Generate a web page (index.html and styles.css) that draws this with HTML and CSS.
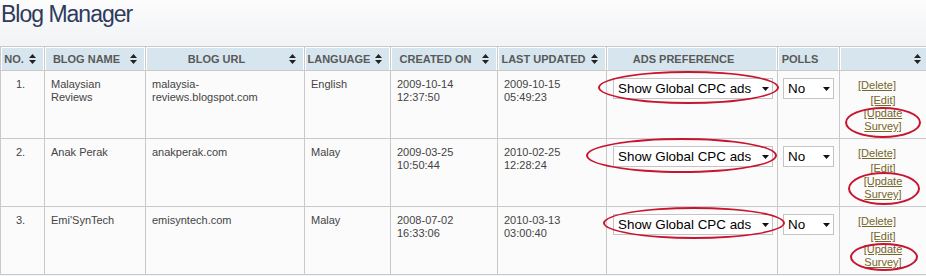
FILE: index.html
```html
<!DOCTYPE html>
<html>
<head>
<meta charset="utf-8">
<link rel="stylesheet" href="styles.css">
</head>
<body>
<div class="page">
  <h1 class="title">Blog Manager</h1>
  <table class="grid">
    <colgroup>
      <col class="c-no"><col class="c-name"><col class="c-url"><col class="c-lang"><col class="c-created"><col class="c-updated"><col class="c-ads"><col class="c-polls"><col class="c-act">
    </colgroup>
    <thead>
      <tr class="head">
        <th><div class="hd"><span class="lbl">NO.</span><svg class="sort" viewBox="0 0 7 10"><path d="M3.5 0L7 4H0z M0 6h7L3.5 10z"/></svg></div></th>
        <th><div class="hd"><span class="lbl">BLOG NAME</span><svg class="sort" viewBox="0 0 7 10"><path d="M3.5 0L7 4H0z M0 6h7L3.5 10z"/></svg></div></th>
        <th><div class="hd"><span class="lbl">BLOG URL</span><svg class="sort" viewBox="0 0 7 10"><path d="M3.5 0L7 4H0z M0 6h7L3.5 10z"/></svg></div></th>
        <th><div class="hd"><span class="lbl">LANGUAGE</span><svg class="sort" viewBox="0 0 7 10"><path d="M3.5 0L7 4H0z M0 6h7L3.5 10z"/></svg></div></th>
        <th><div class="hd"><span class="lbl">CREATED ON</span><svg class="sort" viewBox="0 0 7 10"><path d="M3.5 0L7 4H0z M0 6h7L3.5 10z"/></svg></div></th>
        <th><div class="hd"><span class="lbl">LAST UPDATED</span><svg class="sort" viewBox="0 0 7 10"><path d="M3.5 0L7 4H0z M0 6h7L3.5 10z"/></svg></div></th>
        <th><div class="hd"><span class="lbl">ADS PREFERENCE</span><span class="sort"></span></div></th>
        <th><div class="hd"><span class="lbl">POLLS</span><span class="sort"></span></div></th>
        <th><div class="hd"><span class="lbl"></span><svg class="sort" viewBox="0 0 7 10"><path d="M3.5 0L7 4H0z M0 6h7L3.5 10z"/></svg></div></th>
      </tr>
    </thead>
    <tbody>
      <tr class="row">
        <td class="num">1.</td>
        <td>Malaysian<br>Reviews</td>
        <td>malaysia-<br>reviews.blogspot.com</td>
        <td>English</td>
        <td>2009-10-14<br>12:37:50</td>
        <td>2009-10-15<br>05:49:23</td>
        <td><div class="select ads"><span>Show Global CPC ads</span><svg class="caret" viewBox="0 0 7 4"><path d="M0 0h7L3.5 4z"/></svg></div></td>
        <td><div class="select polls"><span>No</span><svg class="caret" viewBox="0 0 7 4"><path d="M0 0h7L3.5 4z"/></svg></div></td>
        <td class="act"><a class="del" href="#">[Delete]</a><a class="edit" href="#">[Edit]</a><a href="#">[Update</a><a href="#">Survey]</a></td>
      </tr>
      <tr class="row">
        <td class="num">2.</td>
        <td>Anak Perak</td>
        <td>anakperak.com</td>
        <td>Malay</td>
        <td>2009-03-25<br>10:50:44</td>
        <td>2010-02-25<br>12:28:24</td>
        <td><div class="select ads"><span>Show Global CPC ads</span><svg class="caret" viewBox="0 0 7 4"><path d="M0 0h7L3.5 4z"/></svg></div></td>
        <td><div class="select polls"><span>No</span><svg class="caret" viewBox="0 0 7 4"><path d="M0 0h7L3.5 4z"/></svg></div></td>
        <td class="act"><a class="del" href="#">[Delete]</a><a class="edit" href="#">[Edit]</a><a href="#">[Update</a><a href="#">Survey]</a></td>
      </tr>
      <tr class="row">
        <td class="num">3.</td>
        <td>Emi'SynTech</td>
        <td>emisyntech.com</td>
        <td>Malay</td>
        <td>2008-07-02<br>16:33:06</td>
        <td>2010-03-13<br>03:00:40</td>
        <td><div class="select ads"><span>Show Global CPC ads</span><svg class="caret" viewBox="0 0 7 4"><path d="M0 0h7L3.5 4z"/></svg></div></td>
        <td><div class="select polls"><span>No</span><svg class="caret" viewBox="0 0 7 4"><path d="M0 0h7L3.5 4z"/></svg></div></td>
        <td class="act"><a class="del" href="#">[Delete]</a><a class="edit" href="#">[Edit]</a><a href="#">[Update</a><a href="#">Survey]</a></td>
      </tr>
    </tbody>
  </table>
  <div class="mark m1"></div>
  <div class="mark m2"></div>
  <div class="mark m3"></div>
  <div class="mark m4"></div>
  <div class="mark m5"></div>
  <div class="mark m6"></div>
</div>
</body>
</html>
```
FILE: styles.css
```css
html, body {
  margin: 0;
  padding: 0;
}
body {
  width: 926px;
  height: 276px;
  overflow: hidden;
  background: linear-gradient(#fcfcfd, #f2f3f5 46px, #f2f3f5);
  font-family: "Liberation Sans", Arial, sans-serif;
}
.page {
  position: relative;
  width: 926px;
  height: 276px;
}
.title {
  margin: 0;
  height: 46px;
  padding-left: 1px;
  font-size: 23px;
  line-height: 28px;
  font-weight: normal;
  letter-spacing: -1px;
  color: #2e3b5b;
}
.grid {
  border-collapse: collapse;
  table-layout: fixed;
  width: 929px;
  background: #fbfbfb;
}
.c-no { width: 44px; }
.c-name { width: 101px; }
.c-url { width: 159px; }
.c-lang { width: 86px; }
.c-created { width: 107px; }
.c-updated { width: 109px; }
.c-ads { width: 171px; }
.c-polls { width: 62px; }
.c-act { width: 90px; }

.grid th, .grid td {
  border: 1px solid #c9c9c9;
}
.head th {
  height: 23px;
  padding: 0;
  background: #d7e6ee;
  box-shadow: inset 1px 1px 0 #fff, inset -1px 0 0 #fff;
  font-size: 11px;
  font-weight: bold;
  color: #595959;
}
.hd {
  display: flex;
  align-items: center;
  padding-left: 2px;
}
.lbl {
  flex: 1;
  text-align: center;
  white-space: nowrap;
}
.sort {
  width: 7px;
  height: 10px;
  margin: 0 8px 0 4px;
  fill: #222;
  flex: none;
}
.row td {
  height: 53px;
  padding: 7px 6px 7px 6px;
  vertical-align: top;
  font-size: 11px;
  line-height: 13px;
  color: #444;
}
.row td.num {
  text-align: center;
  padding-left: 2px;
}
.select {
  display: flex;
  align-items: center;
  justify-content: space-between;
  height: 19px;
  background: #fff;
  border: 1px solid #c4c4c4;
  font-size: 13.4px;
  color: #000;
  padding: 0 3px 0 4px;
  box-sizing: content-box;
}
.select.ads { width: 151px; }
.select.polls { width: 42px; margin-left: -1px; }
.caret {
  width: 7px;
  height: 4px;
  fill: #111;
  flex: none;
}
.row td.act {
  text-align: center;
  padding: 8px 3px 0 0;
}
.act a {
  display: block;
  color: #76662a;
  text-decoration: underline;
  line-height: 13px;
}
.act a.del { padding-right: 12px; }
.act a.edit { margin-top: 2px; }

.mark {
  position: absolute;
  border: 2px solid #c8142f;
  border-radius: 50%;
  box-sizing: border-box;
}
.m1 { left: 598px; top: 71px; width: 181px; height: 33px; }
.m2 { left: 845px; top: 107px; width: 76px; height: 31px; }
.m3 { left: 586px; top: 138px; width: 191px; height: 35px; }
.m4 { left: 848px; top: 172px; width: 72px; height: 33px; }
.m5 { left: 603px; top: 207px; width: 182px; height: 32px; }
.m6 { left: 850px; top: 243px; width: 68px; height: 28px; }
```
